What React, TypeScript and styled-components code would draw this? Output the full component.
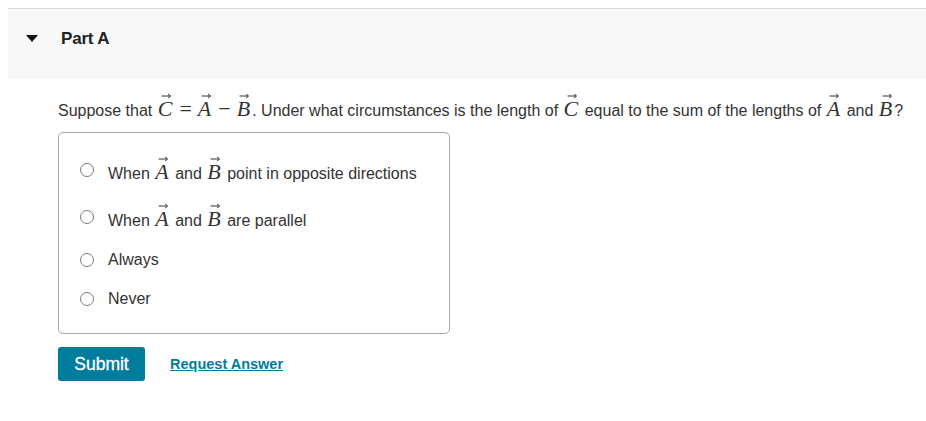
import React from "react";
import styled, { createGlobalStyle } from "styled-components";

const Global = createGlobalStyle`
  html, body { background: #fff; }
  body {
    margin: 8px 0 0 8px;
    font-family: Arial, "Liberation Sans", sans-serif;
    color: #333;
  }
`;

const Section = styled.section`
  width: 918px;
  border-top: 1px solid #dcdcdc;
`;

const Header = styled.div`
  height: 70px;
  box-sizing: border-box;
  background: #f8f8f8;
  display: flex;
  align-items: center;
  padding: 0 0 11px 18px;
  gap: 23px;
`;

const Caret = styled.span`
  width: 0;
  height: 0;
  border-left: 6px solid transparent;
  border-right: 6px solid transparent;
  border-top: 7px solid #111;
`;

const Title = styled.h2`
  margin: 0;
  font-size: 17px;
  font-weight: bold;
  color: #222;
  letter-spacing: -0.2px;
`;

const Body = styled.div`
  padding: 17px 0 0 50px;
`;

const Question = styled.p`
  margin: 0;
  font-size: 16px;
  line-height: 26px;
  color: #333;
  white-space: nowrap;
`;

const VecWrap = styled.span`
  position: relative;
  display: inline-block;
  font-family: "Liberation Serif", "Times New Roman", serif;
  font-style: italic;
  font-size: 22px;
  line-height: 20px;
  color: #333;
  margin: 0 2px 0 1px;
`;

const ArrowSvg = styled.svg`
  position: absolute;
  left: 50%;
  top: -6px;
  transform: translateX(-40%);
`;

const Vec = ({ l }: { l: string }) => (
  <VecWrap>
    {l}
    <ArrowSvg width="11" height="6" viewBox="0 0 11 6">
      <path d="M1 3 H9.5" stroke="#333" strokeWidth="1" fill="none" />
      <path d="M7.5 1 L10 3 L7.5 5" stroke="#333" strokeWidth="1" fill="none" />
    </ArrowSvg>
  </VecWrap>
);

const Op = styled.span`
  font-family: "Liberation Serif", "Times New Roman", serif;
  font-size: 22px;
  margin: 0 5px;
  color: #333;
`;

const Choices = styled.div`
  margin-top: 8px;
  width: 392px;
  height: 202px;
  box-sizing: border-box;
  border: 1px solid #a8a8a8;
  border-radius: 5px;
  padding-top: 13px;
`;

const Row = styled.label<{ $tall?: boolean }>`
  display: flex;
  align-items: center;
  height: ${(p) => (p.$tall ? 47 : 39)}px;
  padding-left: 21px;
  gap: 14px;
  font-size: 16px;
  color: #333;
`;

const Radio = styled.span`
  width: 12px;
  height: 12px;
  border: 1.3px solid #7a7a7a;
  border-radius: 50%;
  flex: none;
`;

const RowText = styled.span<{ $tall?: boolean }>`
  padding-top: ${(p) => (p.$tall ? 6 : 0)}px;
`;

const Actions = styled.div`
  display: flex;
  align-items: center;
  margin-top: 13px;
  gap: 25px;
`;

const Submit = styled.button`
  width: 87px;
  height: 34px;
  background: #007c9c;
  border: none;
  border-radius: 3px;
  color: #fff;
  font-family: Arial, "Liberation Sans", sans-serif;
  font-size: 17.5px;
  font-weight: normal;
  -webkit-text-stroke: 0.3px #fff;
  padding: 0;
`;

const Link = styled.a`
  color: #007c9c;
  font-size: 14.5px;
  font-weight: bold;
  text-decoration: underline;
  cursor: pointer;
`;

export default function App() {
  return (
    <>
      <Global />
      <Section>
        <Header>
          <Caret />
          <Title>Part A</Title>
        </Header>
        <Body>
          <Question>
            Suppose that <Vec l="C" />
            <Op>=</Op>
            <Vec l="A" />
            <Op>−</Op>
            <Vec l="B" />. Under what circumstances is the length of <Vec l="C" /> equal to the
            sum of the lengths of <Vec l="A" /> and <Vec l="B" />?
          </Question>
          <Choices>
            <Row $tall>
              <Radio />
              <RowText $tall>
                When <Vec l="A" /> and <Vec l="B" /> point in opposite directions
              </RowText>
            </Row>
            <Row $tall>
              <Radio />
              <RowText $tall>
                When <Vec l="A" /> and <Vec l="B" /> are parallel
              </RowText>
            </Row>
            <Row>
              <Radio />
              <RowText>Always</RowText>
            </Row>
            <Row>
              <Radio />
              <RowText>Never</RowText>
            </Row>
          </Choices>
          <Actions>
            <Submit>Submit</Submit>
            <Link>Request Answer</Link>
          </Actions>
        </Body>
      </Section>
    </>
  );
}
